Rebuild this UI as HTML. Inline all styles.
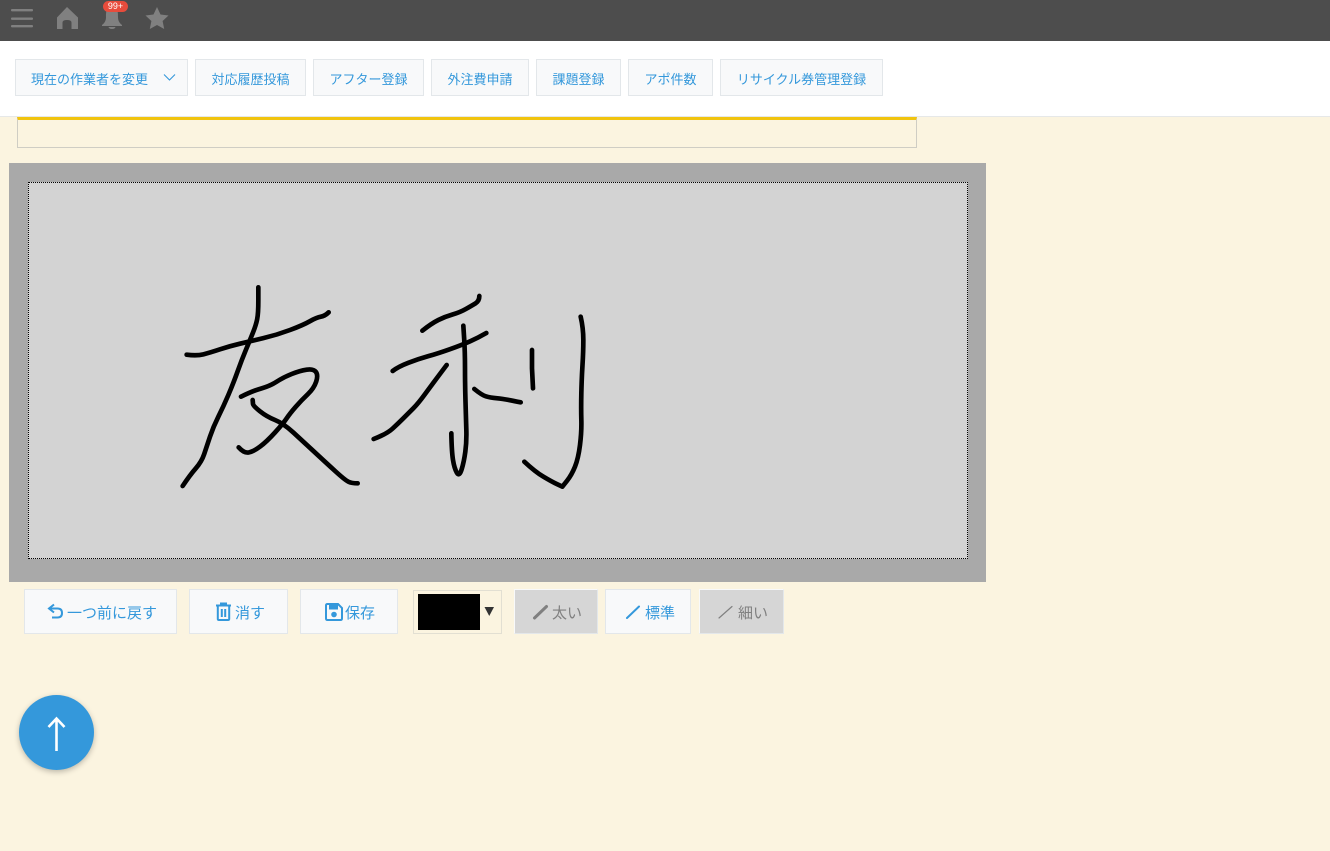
<!DOCTYPE html>
<html lang="ja"><head><meta charset="utf-8"><title>署名</title>
<style>
html,body{margin:0;padding:0;width:1330px;height:851px;overflow:hidden;background:#fbf4e0;font-family:"Liberation Sans","Noto Sans CJK JP",sans-serif}
.a{position:absolute;box-sizing:border-box}
.b{position:absolute;box-sizing:border-box;background:#f8f9fa;border:1px solid #e3e7ea;color:#3498db;font-size:13px;top:59px;height:37px;line-height:40px;text-align:center;white-space:nowrap}
.c{position:absolute;box-sizing:border-box;background:#f8f9fa;border:1px solid #e3e7ea;color:#3498db;font-size:15px;top:589px;height:45px;line-height:47px;white-space:nowrap}
.g{background:#d6d6d6;color:#808080;border-left:1px solid #f8f9fa;border-top:1px solid #f8f9fa}
.t{position:absolute;top:0}
svg{position:absolute;overflow:visible}
</style></head><body>
<div class="a" style="left:0;top:0;width:1330px;height:41px;background:#4d4d4d"></div>
<svg style="left:0;top:0" width="180" height="41" fill="#808080">
<rect x="11" y="9" width="22" height="2.4" rx="1"/><rect x="11" y="17.5" width="22" height="2.4" rx="1"/><rect x="11" y="25" width="22" height="2.4" rx="1"/>
<path d="M67 7 L78 17.5 V29 H71.5 V22.5 Q71.5 20 67 20 Q62.5 20 62.5 22.5 V29 H57 V17.5 Z"/>
<path d="M112 7 C106 7 106 12 106 17 C106 21 104.5 23 102 25 V26 H122 V25 C119.500 23 118 21 118 17 C118 12 118 7 112 7 Z"/><path d="M108.500 27 H115.500 Q115 29 112 29 Q109 29 108.500 27 Z"/>
<path d="M157 7 L160.500 14.500 L168.500 15.500 L162.600 21 L164.200 29 L157 25 L149.800 29 L151.400 21 L145.500 15.500 L153.500 14.500 Z"/>
</svg>
<div class="a" style="left:103px;top:1px;width:25px;height:11px;border-radius:6px;background:#e74c3c;color:#fff;font-size:9px;line-height:11px;text-align:center">99+</div>

<div class="a" style="left:0;top:41px;width:1330px;height:76px;background:#fff;border-bottom:1px solid #e6e8e8"></div>
<div class="b" style="left:15px;width:173px;text-align:left;padding-left:15px">現在の作業者を変更</div>
<svg style="left:163px;top:73px" width="13" height="9"><path d="M1 1.500 L6.500 7 L12 1.500" fill="none" stroke="#3498db" stroke-width="1.100"/></svg>
<div class="b" style="left:195px;width:111px">対応履歴投稿</div>
<div class="b" style="left:313px;width:111px">アフター登録</div>
<div class="b" style="left:431px;width:98px">外注費申請</div>
<div class="b" style="left:536px;width:85px">課題登録</div>
<div class="b" style="left:628px;width:85px">アポ件数</div>
<div class="b" style="left:720px;width:163px">リサイクル券管理登録</div>

<div class="a" style="left:17px;top:117px;width:900px;height:31px;border:1px solid #cfcdc4;border-top:3px solid #f1c40f"></div>

<div class="a" style="left:9px;top:163px;width:977px;height:419px;background:#a9a9a9"></div>
<div class="a" style="left:28px;top:182px;width:940px;height:377px;background:#d3d3d3;border:1px dotted #000"></div>
<svg style="left:0;top:0" width="1330" height="851" fill="none" stroke="#000" stroke-width="14" stroke-linecap="round" stroke-linejoin="round">
<g transform="translate(170 280) scale(.33333)">
<path d="M265 22 L265 61 Q265 100 261.5 117.5 Q258 135 249 157.5 Q240 180 227.5 210 Q215 240 202.5 275 Q190 310 175 345 Q160 380 145 410 Q130 440 120 470 Q110 500 102.5 522.5 Q95 545 77.5 565 Q60 585 38 618"/>
<path d="M50 224 Q80 228 100 223 Q120 218 150 208 Q180 198 210 191 Q240 184 280 174.5 Q320 165 360 150 Q400 135 420 123.5 Q440 112 452.5 110 Q465 108 476 97"/>
<path d="M213 350 Q250 332 275 325 Q300 318 320 305 Q340 292 365 282 Q390 272 410 269 Q430 266 437.5 275.5 Q445 285 438.5 305 Q432 325 413.5 342.5 Q395 360 377.5 380 Q360 400 350 415 Q340 430 315 457.5 Q290 485 270 500 Q250 515 236 517.5 Q222 520 206 502"/>
<path d="M248 360 L249 372 Q250 378 270 394 Q290 410 315 420 Q340 430 370 457.5 Q400 485 435 517.5 Q470 550 497.5 575 Q525 600 535 605 Q545 610 563 610"/>
</g>
<g transform="translate(365 285) scale(.33333)">
<path d="M172 137 Q200 115 220 105 Q240 95 262.5 88.5 Q285 82 302.5 72 Q320 62 331.5 55 Q343 48 343 33"/>
<path d="M83 258 Q100 245 130 233.5 Q160 222 190 213.5 Q220 205 255 192.5 Q290 180 315 169 Q340 158 364 144"/>
<path d="M245 240 L222.5 270 Q200 300 180 327.5 Q160 355 145 370 Q130 385 115 400 Q100 415 82.5 431 Q65 447 26 462"/>
<path d="M295 122 L297.5 161 Q300 200 300 250 Q300 300 301.5 350 Q303 400 304 435 Q305 470 301 500 Q297 530 290 553 Q283 576 275.5 563 Q268 550 264 525 Q260 500 259 445"/>
<path d="M328 312 Q350 330 362.5 334 Q375 338 397.5 340 Q420 342 467 352"/>
<path d="M501 195 L501 250 L504 310"/>
<path d="M647 95 Q655 130 655 165 Q655 200 652.5 240 Q650 280 649 325 Q648 370 649 405 Q650 440 645 480 Q640 520 630 545 Q620 570 606 587.5 L592 605 L576 597.5 Q560 590 535 575 Q510 560 478 530"/>
</g>
</svg>

<div class="c" style="left:24px;width:153px"><span class="t" style="left:42px">一つ前に戻す</span></div>
<svg style="left:47px;top:603px" width="18" height="18" fill="none" stroke="#3498db" stroke-width="2"><path d="M7 1.500 L2 5.500 L7 9.500 M2.500 5.500 H10.500 Q15 5.500 15 10 Q15 14.500 10.500 14.500 H5"/></svg>
<div class="c" style="left:189px;width:99px"><span class="t" style="left:45px">消す</span></div>
<svg style="left:215px;top:602px" width="18" height="20" fill="none" stroke="#3498db" stroke-width="2"><path d="M1 3.500 H16 M6 3 V1.500 H11 V3 M2.800 4 V17 Q2.800 18 4 18 H13 Q14.200 18 14.200 17 V4 M6.800 7 V15 M10.200 7 V15"/></svg>
<div class="c" style="left:300px;width:98px"><span class="t" style="left:44px">保存</span></div>
<svg style="left:325px;top:603px" width="18" height="18"><path d="M2.500 1 H13 L17 5 V15.500 Q17 17 15.500 17 H2.500 Q1 17 1 15.500 V2.500 Q1 1 2.500 1 Z" fill="none" stroke="#3498db" stroke-width="2"/><rect x="4" y="2" width="9" height="4.500" fill="#3498db"/><circle cx="9" cy="11.500" r="2.800" fill="#3498db"/></svg>

<div class="a" style="left:413px;top:590px;width:89px;height:44px;border:1px solid #e2dfd2"></div>
<div class="a" style="left:418px;top:594px;width:62px;height:36px;background:#000"></div>
<svg style="left:484px;top:607px" width="11" height="9"><path d="M.5 0 H10 L5.250 9 Z" fill="#333"/></svg>

<div class="c g" style="left:514px;width:84px"><span class="t" style="left:37px">太い</span></div>
<svg style="left:532px;top:603px" width="18" height="18"><path d="M2.500 15 L14.500 3.500" stroke="#808080" stroke-width="3" stroke-linecap="round" fill="none"/></svg>
<div class="c" style="left:605px;width:86px"><span class="t" style="left:39px">標準</span></div>
<svg style="left:624px;top:603px" width="18" height="18"><path d="M3 15 L15 3.500" stroke="#3498db" stroke-width="2" stroke-linecap="round" fill="none"/></svg>
<div class="c g" style="left:699px;width:85px"><span class="t" style="left:38px">細い</span></div>
<svg style="left:717px;top:603px" width="18" height="18"><path d="M2 15 L15 3.500" stroke="#808080" stroke-width="1.200" stroke-linecap="round" fill="none"/></svg>

<div class="a" style="left:19px;top:695px;width:75px;height:75px;border-radius:50%;background:#3498db;box-shadow:0 2px 6px rgba(0,0,0,.25)"></div>
<svg style="left:19px;top:695px" width="75" height="75" fill="none" stroke="#fff" stroke-width="2.600"><path d="M37.500 23 V56 M29.500 32 L37.500 23.500 L45.500 32"/></svg>
</body></html>
